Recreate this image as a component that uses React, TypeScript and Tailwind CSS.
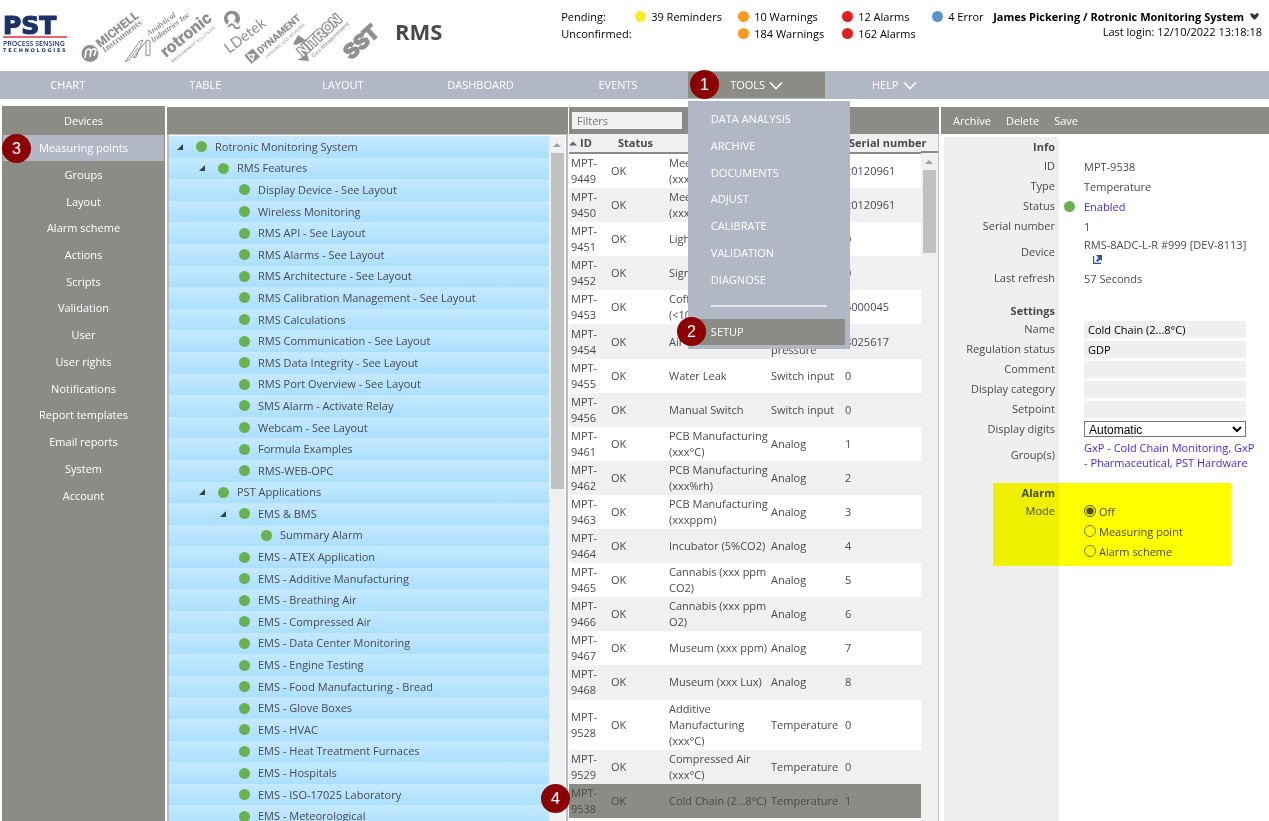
import { useState, type ReactNode } from "react";

const statusGroups = [
  { color: "bg-[#f8ec2a]", pending: "39 Reminders", unconfirmed: "", width: "w-[103px]" },
  { color: "bg-[#fb9a1c]", pending: "10 Warnings", unconfirmed: "184 Warnings", width: "w-[104px]" },
  { color: "bg-[#e01f1f]", pending: "12 Alarms", unconfirmed: "162 Alarms", width: "w-[90px]" },
  { color: "bg-[#5b93c9]", pending: "4 Error", unconfirmed: "", width: "w-[52px]" },
];

const sideItems = [
  "Devices", "Measuring points", "Groups", "Layout", "Alarm scheme", "Actions", "Scripts", "Validation",
  "User", "User rights", "Notifications", "Report templates", "Email reports", "System", "Account",
];

const toolItems = ["DATA ANALYSIS", "ARCHIVE", "DOCUMENTS", "ADJUST", "CALIBRATE", "VALIDATION", "DIAGNOSE"];

type Node = { label: string; level: number; open?: boolean };

const tree: Node[] = [
  { label: "Rotronic Monitoring System", level: 0, open: true },
  { label: "RMS Features", level: 1, open: true },
  { label: "Display Device - See Layout", level: 2 },
  { label: "Wireless Monitoring", level: 2 },
  { label: "RMS API - See Layout", level: 2 },
  { label: "RMS Alarms - See Layout", level: 2 },
  { label: "RMS Architecture - See Layout", level: 2 },
  { label: "RMS Calibration Management - See Layout", level: 2 },
  { label: "RMS Calculations", level: 2 },
  { label: "RMS Communication - See Layout", level: 2 },
  { label: "RMS Data Integrity - See Layout", level: 2 },
  { label: "RMS Port Overview - See Layout", level: 2 },
  { label: "SMS Alarm - Activate Relay", level: 2 },
  { label: "Webcam - See Layout", level: 2 },
  { label: "Formula Examples", level: 2 },
  { label: "RMS-WEB-OPC", level: 2 },
  { label: "PST Applications", level: 1, open: true },
  { label: "EMS & BMS", level: 2, open: true },
  { label: "Summary Alarm", level: 3 },
  { label: "EMS - ATEX Application", level: 2 },
  { label: "EMS - Additive Manufacturing", level: 2 },
  { label: "EMS - Breathing Air", level: 2 },
  { label: "EMS - Compressed Air", level: 2 },
  { label: "EMS - Data Center Monitoring", level: 2 },
  { label: "EMS - Engine Testing", level: 2 },
  { label: "EMS - Food Manufacturing - Bread", level: 2 },
  { label: "EMS - Glove Boxes", level: 2 },
  { label: "EMS - HVAC", level: 2 },
  { label: "EMS - Heat Treatment Furnaces", level: 2 },
  { label: "EMS - Hospitals", level: 2 },
  { label: "EMS - ISO-17025 Laboratory", level: 2 },
  { label: "EMS - Meteorological", level: 2 },
];

const indent = ["pl-2", "pl-[30px]", "pl-[51px]", "pl-[73px]"];

const points = [
  ["9449", "Meeting Room (xxxppm)", "Analog", "20120961"],
  ["9450", "Meeting Room (xxx%rh)", "Analog", "20120961"],
  ["9451", "Light", "Digital", "0"],
  ["9452", "Signal", "Digital", "0"],
  ["9453", "Coffee Machine (<100°C)", "Analog", "6000045"],
  ["9454", "Air", "Absolute pressure", "8025617"],
  ["9455", "Water Leak", "Switch input", "0"],
  ["9456", "Manual Switch", "Switch input", "0"],
  ["9461", "PCB Manufacturing (xxx°C)", "Analog", "1"],
  ["9462", "PCB Manufacturing (xxx%rh)", "Analog", "2"],
  ["9463", "PCB Manufacturing (xxxppm)", "Analog", "3"],
  ["9464", "Incubator (5%CO2)", "Analog", "4"],
  ["9465", "Cannabis (xxx ppm CO2)", "Analog", "5"],
  ["9466", "Cannabis (xxx ppm O2)", "Analog", "6"],
  ["9467", "Museum (xxx ppm)", "Analog", "7"],
  ["9468", "Museum (xxx Lux)", "Analog", "8"],
  ["9528", "Additive Manufacturing (xxx°C)", "Temperature", "0"],
  ["9529", "Compressed Air (xxx°C)", "Temperature", "0"],
  ["9538", "Cold Chain (2...8°C)", "Temperature", "1"],
];

function Badge({ n, className }: { n: number; className: string }) {
  return (
    <span
      className={`absolute z-30 flex size-[29px] items-center justify-center rounded-full bg-[#8b0000] font-['Liberation_Sans',sans-serif] text-base text-white ${className}`}
    >
      {n}
    </span>
  );
}

function Dot({ color = "bg-[#69b150]" }: { color?: string }) {
  return <span className={`size-[11px] shrink-0 rounded-full ${color}`} />;
}

function Chevron() {
  return (
    <svg width="14" height="9" viewBox="0 0 14 9" fill="none" stroke="white" strokeWidth="1.6" aria-hidden="true">
      <path d="M1 1.5l6 6 6-6" />
    </svg>
  );
}

function Scrollbar({ thumb }: { thumb: string }) {
  return (
    <div className="flex w-4 flex-1 flex-col items-center bg-[#f0f0f0]">
      <svg width="8" height="17" viewBox="0 0 8 17" fill="#a0a0a0" aria-hidden="true">
        <path d="M0 11l4-4 4 4z" />
      </svg>
      <div className={`w-[13px] bg-[#c1c1c1] ${thumb}`} />
    </div>
  );
}

function PstLogo() {
  return (
    <svg width="68" height="40" viewBox="0 0 68 40" className="overflow-visible" aria-label="PST Process Sensing Technologies">
      <text x="1" y="18" fontFamily="DejaVu Sans" fontWeight="bold" fontSize="25" fill="#1c3268" stroke="#1c3268" strokeWidth="1.2">
        PST
      </text>
      <path d="M1 21h64" stroke="#e0323c" strokeWidth="1.6" />
      <text x="1" y="30" fontFamily="Open Sans" fontWeight="600" fontSize="7" fill="#1c3268">
        PROCESS SENSING
      </text>
      <text x="1" y="36" fontFamily="DejaVu Sans" fontWeight="bold" fontSize="5" fill="#1c3268">
        T E C H N O L O G I E S
      </text>
    </svg>
  );
}

function BrandLogos() {
  return (
    <svg width="304" height="62" viewBox="80 5 304 62" fill="#8f9092" className="overflow-visible" aria-label="Group brands">
      <circle cx="90" cy="53.5" r="8.5" />
      <path d="M85 58l1-7q3-4 5 0l-1 6 1-6q3-4 5-1l-2 6" fill="none" stroke="white" strokeWidth="1.6" />
      <g transform="translate(100 48) rotate(-38)">
        <text fontFamily="Roboto" fontWeight="900" fontSize="12">MICHELL</text>
        <text x="1" y="7" fontFamily="Liberation Serif" fontWeight="bold" fontSize="9">Instruments</text>
      </g>
      <path d="M125 62l15-21 3-1-7 17-3 1 14-18 3 1v14l-4 1V41M125 62l4-2 9-12" fill="none" stroke="#8f9092" strokeWidth="1" />
      <g transform="translate(149 36) rotate(-36)">
        <text fontFamily="Liberation Serif" fontWeight="bold" fontStyle="italic" fontSize="8">Analytical</text>
        <text x="-1" y="8" fontFamily="Liberation Serif" fontWeight="bold" fontStyle="italic" fontSize="8">Industries Inc</text>
      </g>
      <g transform="translate(166 58) rotate(-39)">
        <text fontFamily="Roboto" fontWeight="900" fontSize="17">rotronic</text>
        <text x="2" y="8" fontFamily="Liberation Sans" fontSize="4">MEASUREMENT SOLUTIONS</text>
      </g>
      <path d="M224 19a8 8 0 1 1 14 5l-4-3a4 4 0 1 0-5 0l-2 4a8 8 0 0 1-3-6z" />
      <path d="M228 27q4-5 6-1t6 1" fill="none" stroke="#8f9092" strokeWidth="1.8" />
      <g transform="translate(229 54) rotate(-37)">
        <text fontFamily="Lato" fontSize="15">LDetek</text>
      </g>
      <g transform="translate(253 64) rotate(-41)">
        <path d="M-1-12h11v11h-11z" />
        <path d="M2-10l5 3.5-5 3.5z" fill="none" stroke="white" strokeWidth="1.5" />
        <text x="12" y="-2" fontFamily="Roboto" fontWeight="900" fontSize="10">DYNAMENT</text>
        <text x="14" y="5" fontFamily="Liberation Sans" fontSize="4">INFRARED GAS SENSORS</text>
      </g>
      <path d="M298 35l9 6-4 1-7 3-3-1zM297 60l4-2 5-8 3 11-12-1z" />
      <g transform="translate(303 57) rotate(-43)">
        <text fontFamily="Liberation Sans" fontWeight="bold" fontSize="14" fill="white" stroke="#8f9092" strokeWidth="2.4" paintOrder="stroke">
          NITRON
        </text>
        <text x="7" y="8" fontFamily="Liberation Sans" fontSize="6">Gas Measurement</text>
      </g>
      <g transform="translate(351 60) rotate(-42)">
        <text fontFamily="Liberation Sans" fontWeight="bold" fontSize="20" stroke="#8f9092" strokeWidth="2">SST</text>
      </g>
    </svg>
  );
}

function Row({
  label,
  children,
  htmlFor,
  dot,
  className = "h-5",
}: {
  label: string;
  children?: ReactNode;
  htmlFor?: string;
  dot?: boolean;
  className?: string;
}) {
  return (
    <div className={`flex items-center ${className}`}>
      <label htmlFor={htmlFor} className="w-[115px] shrink-0 pr-1 text-right">
        {label}
      </label>
      <span className="flex w-[25px] shrink-0 pl-[5px]">{dot && <Dot />}</span>
      <div className="w-[174px] leading-[15px]">{children}</div>
    </div>
  );
}

function Heading({ children }: { children: ReactNode }) {
  return <h3 className="w-[115px] pr-1 text-right leading-4 font-bold">{children}</h3>;
}

export default function App() {
  const [mode, setMode] = useState("Off");

  return (
    <div className="flex h-screen flex-col overflow-hidden bg-white font-['Open_Sans','Noto_Sans',sans-serif] text-[11px] leading-4 text-[#4a4a4a]">
      <header className="flex h-[71px] shrink-0 items-start text-black">
        <a href="#home" className="mt-4 ml-0.5">
          <PstLogo />
        </a>
        <div className="mt-[5px] ml-[10px]">
          <BrandLogos />
        </div>
        <h1 className="mt-[15px] ml-[11px] text-[22px] leading-8 font-bold text-[#4a4a4a]">RMS</h1>
        <div className="mt-2 ml-auto flex leading-[17px]">
          <div className="w-[74px]">
            <div>Pending:</div>
            <div>Unconfirmed:</div>
          </div>
          {statusGroups.map((s) => (
            <div key={s.pending} className={`whitespace-nowrap ${s.width}`}>
              <a href="#events" className="flex items-center gap-[5px]">
                <Dot color={s.color} />
                {s.pending}
              </a>
              {s.unconfirmed && (
                <a href="#events" className="flex items-center gap-[5px]">
                  <Dot color={s.color} />
                  {s.unconfirmed}
                </a>
              )}
            </div>
          ))}
        </div>
        <div className="mt-[9px] mr-[7px] ml-[9px] text-right leading-[15px] whitespace-nowrap">
          <button type="button" className="flex items-center gap-[6px] pr-[3px] font-bold">
            James Pickering / Rotronic Monitoring System
            <svg width="9" height="7" viewBox="0 0 9 7" fill="#333" aria-hidden="true">
              <path d="M0 1l2-1 2.5 2L7 0l2 1-1.5 3-3 3-3-3z" />
            </svg>
          </button>
          <div>Last login: 12/10/2022 13:18:18</div>
        </div>
      </header>

      <nav className="h-7 shrink-0 bg-[#b1b7c4] text-white">
        <div className="grid h-full w-[963px] grid-cols-7">
          {["CHART", "TABLE", "LAYOUT", "DASHBOARD", "EVENTS"].map((t) => (
            <a key={t} href="#tab" className="flex items-center justify-center pr-0.5">
              {t}
            </a>
          ))}
          <div className="relative my-px">
            <Badge n={1} className="top-[-2px] left-[2px]" />
            <button type="button" className="flex h-full w-full items-center justify-center gap-1 bg-[#8b8c85]">
              TOOLS
              <Chevron />
            </button>
            <div className="absolute top-full left-0 z-20 mt-[3px] w-[162px] bg-[#b1b7c4] pt-[5px] pb-1">
              <div className="grid h-[187px] auto-rows-fr pl-[23px]">
                {toolItems.map((t) => (
                  <a key={t} href="#tool" className="flex items-center">
                    {t}
                  </a>
                ))}
              </div>
              <hr className="mt-3 mr-[23px] mb-3 ml-[23px] border-t-2 border-[#e6e6e6]" />
              <div className="relative mr-[5px] bg-[#8b8c85]">
                <Badge n={2} className="top-[-2px] left-[-11px]" />
                <a href="#setup" className="flex h-[26px] items-center pl-[23px]">
                  SETUP
                </a>
              </div>
            </div>
          </div>
          <button type="button" className="flex items-center justify-center gap-1">
            HELP
            <Chevron />
          </button>
        </div>
      </nav>

      <div className="flex min-h-0 flex-1 pt-[7px] pl-0.5">
        <aside className="relative w-[163px] shrink-0 bg-[#8b8c85] text-white">
          <Badge n={3} className="top-7 left-0" />
          <div className="grid h-[403px] auto-rows-fr pt-0.5">
            {sideItems.map((s) => (
              <a
                key={s}
                href="#section"
                className={`mx-px flex items-center justify-center ${s === "Measuring points" ? "bg-[#b1b7c4]" : ""}`}
              >
                {s}
              </a>
            ))}
          </div>
        </aside>

        <section className="ml-0.5 flex w-[401px] shrink-0 flex-col pt-px">
          <div className="h-[27px] shrink-0 bg-[#8b8c85]" />
          <div className="relative flex min-h-0 flex-1 border-t border-r-2 border-l-2 border-[#b8bdc9] pt-px">
            <ul className="grid h-[691px] w-[380px] auto-rows-fr">
              {tree.map((n) => (
                <li
                  key={n.label}
                  className={`flex items-center bg-linear-to-b from-[#c5e9ff] to-[#abdfff] ${indent[n.level]}`}
                >
                  <svg width="6" height="6" viewBox="0 0 7 7" className="mr-[13px] shrink-0" fill="#3a3f44" aria-hidden="true">
                    {n.open && <path d="M7 0v7H0z" />}
                  </svg>
                  <Dot />
                  <span className="pl-2">{n.label}</span>
                </li>
              ))}
            </ul>
            <div className="flex h-full flex-1 flex-col">
              <Scrollbar thumb="h-[336px]" />
            </div>
            <Badge n={4} className="bottom-2 left-[372px]" />
          </div>
        </section>

        <section className="ml-px flex w-[370px] shrink-0 flex-col pt-px">
          <div className="h-[27px] shrink-0 bg-[#8b8c85] pt-[5px] pl-[3px]">
            <input
              aria-label="Filters"
              placeholder="Filters"
              className="block h-[17px] w-[110px] bg-[#f0f0f0] px-[5px] placeholder:text-[#757575]"
            />
          </div>
          <div className="flex min-h-0 flex-1 border-r border-[#c8c8c8]">
            <div className="relative z-10 min-w-0 flex-1">
              <table className="h-[684px] w-[352px] table-fixed border-collapse leading-4">
                <thead>
                  <tr className="h-[19px] border-b-2 border-[#8b8c85] bg-[#f0f0f0] text-left whitespace-nowrap">
                    <th className="w-10 p-0">
                      <span className="flex items-center gap-[3px]">
                        <svg width="8" height="5" viewBox="0 0 8 5" fill="#666" aria-hidden="true">
                          <path d="M0 4.5l4-4 4 4z" />
                        </svg>
                        ID
                      </span>
                    </th>
                    <th className="w-[60px] p-0 pl-[9px]">Status</th>
                    <th className="w-[102px] p-0 pl-6">Name</th>
                    <th className="w-[74px] p-0 pl-0.5">Type</th>
                    <th className="p-0 pl-1">Serial number</th>
                  </tr>
                </thead>
                <tbody>
                  {points.map(([id, name, type, serial]) => (
                    <tr key={id} className={id === "9538" ? "bg-[#8b8c85]" : "odd:bg-white even:bg-[#f0f0f0]"}>
                      <td className="px-0.5 py-px">MPT-{id}</td>
                      <td className="px-0.5 py-px">OK</td>
                      <td className="py-px pl-0">{name}</td>
                      <td className="py-px pl-0">{type}</td>
                      <td className="py-px pl-0">{serial}</td>
                    </tr>
                  ))}
                </tbody>
              </table>
            </div>
            <div className="flex w-[17px] flex-col bg-[#f0f0f0]">
              <div className="h-[19px] shrink-0 border-b-2 border-[#8b8c85]" />
              <Scrollbar thumb="h-[83px]" />
            </div>
          </div>
        </section>

        <section className="ml-0.5 flex min-w-0 flex-1 flex-col pt-px">
          <div className="flex h-[27px] shrink-0 items-center gap-[15px] bg-[#8b8c85] pl-3 text-white">
            <button type="button">Archive</button>
            <button type="button">Delete</button>
            <button type="button">Save</button>
          </div>
          <form className="relative mt-[3px] ml-[3px] flex-1 bg-linear-to-r from-[#efefef] from-[115px] to-white to-[115px] pt-0.5">
            <Heading>Info</Heading>
            <div className="h-px" />
            <Row label="ID">MPT-9538</Row>
            <Row label="Type">Temperature</Row>
            <Row label="Status" dot>
              <a href="#status" className="text-[#4a26e8]">Enabled</a>
            </Row>
            <Row label="Serial number">1</Row>
            <Row label="Device" className="h-8">
              <div className="whitespace-nowrap">RMS-8ADC-L-R #999 [DEV-8113]</div>
              <a href="#device" aria-label="Open device" className="flex h-[15px] items-center pl-[9px]">
                <svg width="9" height="9" viewBox="0 0 9 9" fill="#2c56a3" aria-hidden="true">
                  <path d="M0 1h1.2v6.8H8V9H0zM3 0h6v6L7.2 4.5 4.5 7 3 5.5 5.5 3z" />
                </svg>
              </a>
            </Row>
            <Row label="Last refresh">57 Seconds</Row>
            <div className="h-[15px]" />
            <Heading>Settings</Heading>
            <Row label="Name" htmlFor="name">
              <input id="name" defaultValue="Cold Chain (2...8°C)" className="block h-[17px] w-[162px] bg-[#efefef] px-1 text-black" />
            </Row>
            <Row label="Regulation status" htmlFor="regulation">
              <input id="regulation" defaultValue="GDP" className="block h-[17px] w-[162px] bg-[#efefef] px-1 text-black" />
            </Row>
            <Row label="Comment" htmlFor="comment">
              <input id="comment" className="block h-[17px] w-[162px] bg-[#efefef] px-1 text-black" />
            </Row>
            <Row label="Display category" htmlFor="category">
              <input id="category" className="block h-[17px] w-[162px] bg-[#efefef] px-1 text-black" />
            </Row>
            <Row label="Setpoint" htmlFor="setpoint">
              <input id="setpoint" className="block h-[17px] w-[162px] bg-[#efefef] px-1 text-black" />
            </Row>
            <Row label="Display digits" htmlFor="digits">
              <select
                id="digits"
                className="block h-4 w-[162px] border border-[#767676] bg-white p-0 font-['Liberation_Sans',sans-serif] text-xs leading-none text-black"
              >
                <option>Automatic</option>
              </select>
            </Row>
            <Row label="Group(s)" className="h-8">
              <a href="#groups" className="text-[#4a26e8]">
                GxP - Cold Chain Monitoring, GxP - Pharmaceutical, PST Hardware
              </a>
            </Row>
            <div className="h-[14px]" />
            <div className="relative">
              <Heading>Alarm</Heading>
              {["Off", "Measuring point", "Alarm scheme"].map((m) => (
                <Row key={m} label={m === "Off" ? "Mode" : ""}>
                  <label className="flex items-center gap-[3px]">
                    <input
                      type="radio"
                      name="mode"
                      checked={mode === m}
                      onChange={() => setMode(m)}
                      className="size-3 accent-[#4a4a4a]"
                    />
                    {m}
                  </label>
                </Row>
              ))}
              <div className="pointer-events-none absolute top-[-2px] left-[49px] h-[83px] w-[238px] bg-[#ffff00] mix-blend-multiply" />
            </div>
          </form>
        </section>
      </div>
    </div>
  );
}
